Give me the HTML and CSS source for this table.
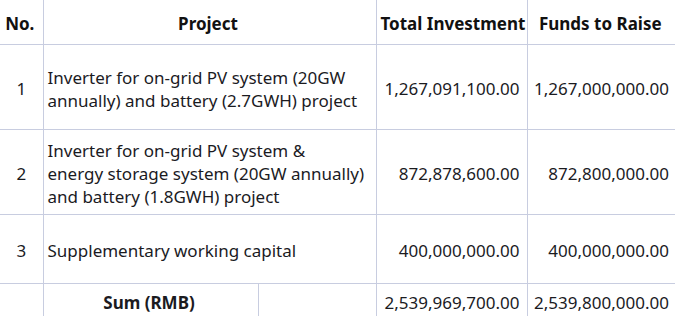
FILE: index.html
```html
<!DOCTYPE html>
<html lang="en">

<head>
    <meta charset="UTF-8">
    <title>Fund Raising Projects</title>
    <link rel="stylesheet" href="styles.css">
</head>

<body>
    <table class="funds">
        <colgroup>
            <col class="col-no">
            <col class="col-project">
            <col class="col-split">
            <col class="col-money">
            <col class="col-money-last">
        </colgroup>
        <thead>
            <tr class="row-head">
                <th>No.</th>
                <th colspan="2">Project</th>
                <th>Total Investment</th>
                <th>Funds to Raise</th>
            </tr>
        </thead>
        <tbody>
            <tr class="row-tall">
                <td class="num">1</td>
                <td colspan="2" class="project">Inverter for on-grid PV system (20GW<br>annually) and battery (2.7GWH) project</td>
                <td class="money">1,267,091,100.00</td>
                <td class="money">1,267,000,000.00</td>
            </tr>
            <tr class="row-tall">
                <td class="num">2</td>
                <td colspan="2" class="project">Inverter for on-grid PV system &amp;<br>energy storage system (20GW annually)<br>and battery (1.8GWH) project</td>
                <td class="money">872,878,600.00</td>
                <td class="money">872,800,000.00</td>
            </tr>
            <tr class="row-mid">
                <td class="num">3</td>
                <td colspan="2" class="project">Supplementary working capital</td>
                <td class="money">400,000,000.00</td>
                <td class="money">400,000,000.00</td>
            </tr>
            <tr class="row-sum">
                <td></td>
                <td class="sum-label">Sum (RMB)</td>
                <td></td>
                <td class="money">2,539,969,700.00</td>
                <td class="money">2,539,800,000.00</td>
            </tr>
        </tbody>
    </table>
</body>

</html>
```

FILE: styles.css
```css
body {
    margin: 0;
    background-color: #fff;
    font-family: "Noto Sans", "Open Sans", sans-serif;
    color: #1b1b1f;
}

.funds {
    border-collapse: collapse;
    table-layout: fixed;
    width: 676px;
    font-size: 17px;
    line-height: 23px;
}

.col-no {
    width: 43px;
}

.col-project {
    width: 215px;
}

.col-split {
    width: 118px;
}

.col-money {
    width: 151px;
}

.col-money-last {
    width: 149px;
}

th,
td {
    border: 1px solid #c8cde0;
    padding: 4px 7px 0 4px;
    vertical-align: middle;
    white-space: nowrap;
}

th {
    font-weight: bold;
    text-align: center;
    color: #111;
}

tr:first-child th {
    border-top: none;
}

th:first-child,
td:first-child {
    border-left: none;
}

th:last-child,
td:last-child {
    border-right: none;
}

.row-head {
    height: 44px;
}

.row-tall {
    height: 85px;
}

.row-mid {
    height: 69px;
}

.row-sum {
    height: 40px;
}

.num {
    text-align: center;
    padding-left: 0;
    padding-right: 0;
}

.project {
    text-align: left;
}

.money {
    text-align: right;
}

.sum-label {
    font-weight: bold;
    text-align: center;
    vertical-align: top;
    padding-top: 7px;
}

.row-sum .money {
    vertical-align: top;
    padding-top: 7px;
}
```
